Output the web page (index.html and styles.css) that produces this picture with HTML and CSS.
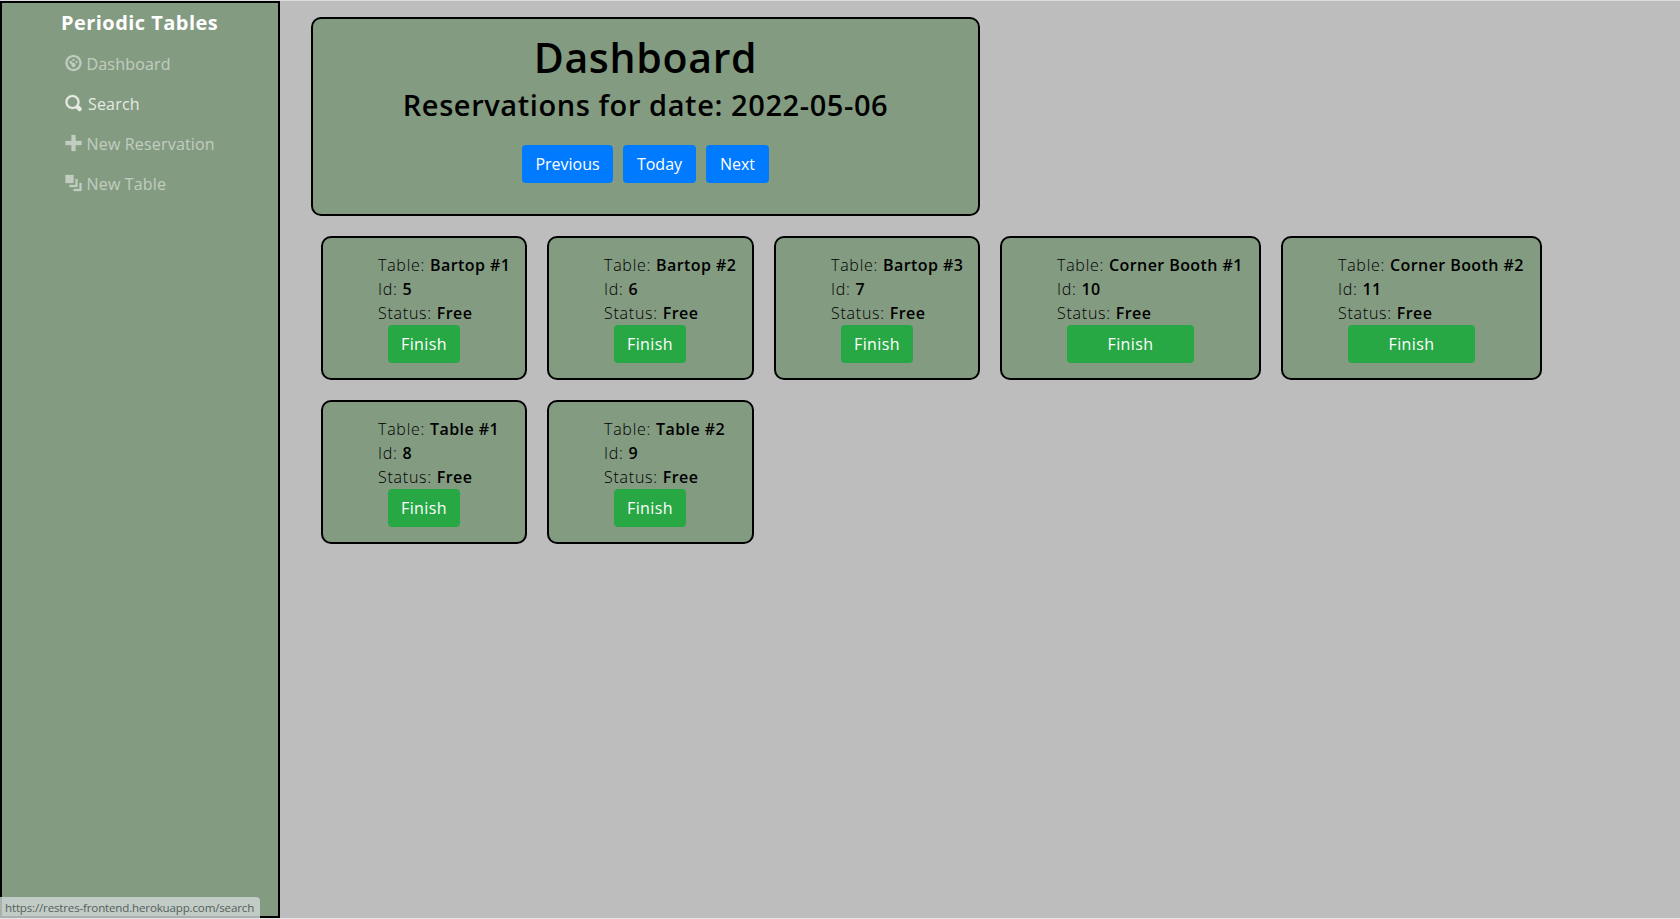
FILE: index.html
```html
<!DOCTYPE html>
<html lang="en">
<head>
<meta charset="utf-8">
<title>Periodic Tables</title>
<link rel="stylesheet" href="styles.css">
</head>
<body>
<div class="app">
  <aside class="sidebar">
    <div class="brand"><span>Periodic Tables</span></div>
    <nav class="menu">
      <a class="link dash"><svg class="icon" viewBox="0 0 8 8"><path d="M4 0c-2.2 0-4 1.8-4 4s1.8 4 4 4 4-1.8 4-4-1.8-4-4-4zm0 1c1.66 0 3 1.34 3 3s-1.34 3-3 3-3-1.34-3-3 1.34-3 3-3zm0 1c-.28 0-.5.22-.5.5s.22.5.5.5.5-.22.5-.5-.22-.5-.5-.5zm-1.66 1a.5.5 0 0 0-.19.84l.91.91c-.02.08-.06.16-.06.25 0 .55.45 1 1 1s1-.45 1-1-.45-1-1-1c-.09 0-.17.04-.25.06l-.91-.91a.5.5 0 0 0-.44-.16.5.5 0 0 0-.06 0zm3.16 0c-.28 0-.5.22-.5.5s.22.5.5.5.5-.22.5-.5-.22-.5-.5-.5z"/></svg><span>Dashboard</span></a>
      <a class="link hover"><svg class="icon" viewBox="0 0 8 8"><path d="M3.5 0c-1.93 0-3.5 1.57-3.5 3.5s1.57 3.5 3.5 3.5c.59 0 1.17-.14 1.66-.41a1 1 0 0 0 .13.13l1 1a1.02 1.02 0 1 0 1.44-1.44l-1-1a1 1 0 0 0-.16-.13c.27-.49.44-1.06.44-1.66 0-1.93-1.55-3.5-3.5-3.5zm0 1c1.39 0 2.5 1.11 2.5 2.5 0 .66-.24 1.27-.66 1.72-.01.01-.02.02-.03.03a1 1 0 0 0-.13.13c-.44.4-1.04.63-1.69.63-1.39 0-2.5-1.11-2.5-2.5s1.11-2.5 2.5-2.5z"/></svg><span>Search</span></a>
      <a class="link"><svg class="icon" viewBox="0 0 8 8"><path d="M3 0v3h-3v2h3v3h2v-3h3v-2h-3v-3h-2z"/></svg><span>New Reservation</span></a>
      <a class="link"><svg class="icon" viewBox="0 0 8 8"><path d="M0 0v4h4v-4h-4zm5 2v3h-3v1h4v-4h-1zm2 2v3h-3v1h4v-4h-1z"/></svg><span>New Table</span></a>
    </nav>
  </aside>
  <main class="content">
    <section class="panel">
      <h1><span>Dashboard</span></h1>
      <h2><span>Reservations for date: 2022-05-06</span></h2>
      <div class="actions">
        <button class="btn prev">Previous</button>
        <button class="btn today">Today</button>
        <button class="btn next">Next</button>
      </div>
    </section>
    <section class="tables">
      <article class="card"><p>Table: <b>Bartop #1</b></p><p>Id: <b>5</b></p><p>Status: <b>Free</b></p><button class="btn finish">Finish</button></article>
      <article class="card"><p>Table: <b>Bartop #2</b></p><p>Id: <b>6</b></p><p>Status: <b>Free</b></p><button class="btn finish">Finish</button></article>
      <article class="card"><p>Table: <b>Bartop #3</b></p><p>Id: <b>7</b></p><p>Status: <b>Free</b></p><button class="btn finish">Finish</button></article>
      <article class="card"><p>Table: <b>Corner Booth #1</b></p><p>Id: <b>10</b></p><p>Status: <b>Free</b></p><button class="btn finish wide">Finish</button></article>
      <article class="card"><p>Table: <b>Corner Booth #2</b></p><p>Id: <b>11</b></p><p>Status: <b>Free</b></p><button class="btn finish wide">Finish</button></article>
      <article class="card"><p>Table: <b>Table #1</b></p><p>Id: <b>8</b></p><p>Status: <b>Free</b></p><button class="btn finish">Finish</button></article>
      <article class="card"><p>Table: <b>Table #2</b></p><p>Id: <b>9</b></p><p>Status: <b>Free</b></p><button class="btn finish">Finish</button></article>
    </section>
  </main>
</div>
<div class="status">https://restres-frontend.herokuapp.com/search</div>
</body>
</html>
```
FILE: styles.css
```css
* { box-sizing: border-box; }
body {
  margin: 0;
  height: 919px;
  overflow: hidden;
  background: #bdbdbd;
  border-top: 1px solid #dcdddd;
  border-bottom: 1px solid #e2e4e6;
  font: 16px/24px "Open Sans", "Noto Sans", sans-serif;
  font-kerning: none;
  color: #000;
}
.app { display: flex; height: 917px; }
.sidebar {
  width: 280px;
  flex: none;
  background: #839b81;
  border: 2px solid #000;
}
.brand {
  height: 40px;
  padding-left: 59px;
  font-size: 20px;
  line-height: 40px;
  font-weight: 700;
  letter-spacing: .45px;
  color: #fff;
  white-space: nowrap;
}
.menu { padding-left: 63px; }
.link {
  display: flex;
  align-items: center;
  gap: 4.5px;
  height: 40px;
  color: #fff;
  letter-spacing: .18px;
  white-space: nowrap;
}
.link span { padding-top: 2px; opacity: .5; }
.link.hover span { opacity: .8; }
.link.hover { gap: 6px; }
.icon {
  width: 17px;
  height: 16px;
  overflow: visible;
  fill: currentColor;
  stroke: currentColor;
  stroke-width: .15;
  opacity: .5;
}
.hover .icon { opacity: .8; }
.content { padding: 16px 0 0 31px; }
.panel {
  width: 669px;
  height: 199px;
  padding-top: 14px;
  border: 2px solid #000;
  border-radius: 10px;
  background: #839b81;
  text-align: center;
}
h1, h2, p { margin: 0; }
h1 { font-size: 41px; line-height: 48px; font-weight: 600; letter-spacing: .7px; }
h2 { font-size: 29px; line-height: 34px; font-weight: 600; margin-top: 7px; letter-spacing: .58px; }
.actions { display: flex; justify-content: center; gap: 10px; margin-top: 23px; }
.btn {
  height: 38px;
  padding: 0;
  border: 0;
  border-radius: 4px;
  background: #007bff;
  color: #fff;
  font: 500 16px/24px "Open Sans", "Noto Sans", sans-serif;
}
.prev { width: 91px; }
.today { width: 73px; }
.next { width: 63px; }
.tables {
  display: grid;
  grid-template-columns: 206px 207px 206px 261px 261px;
  gap: 20px;
  padding: 20px 0 0 10px;
}
.card {
  height: 144px;
  padding: 15px 0 15px 55px;
  border: 2px solid #000;
  border-radius: 10px;
  background: #839b81;
  white-space: nowrap;
}
.card p { font-weight: 350; letter-spacing: .75px; }
.card b { font-weight: 600; letter-spacing: .42px; }
.finish { display: block; width: 72px; margin-left: 10px; background: #28a745; letter-spacing: .4px; }
.finish.wide { width: 127px; }
.status {
  position: absolute;
  left: 0;
  bottom: 1px;
  width: 260px;
  height: 21px;
  padding-left: 5px;
  border-top-right-radius: 4px;
  background: rgba(206, 215, 213, .82);
  font-size: 11.6px;
  line-height: 22px;
  letter-spacing: -.18px;
  color: #56605c;
  white-space: nowrap;
}
```
